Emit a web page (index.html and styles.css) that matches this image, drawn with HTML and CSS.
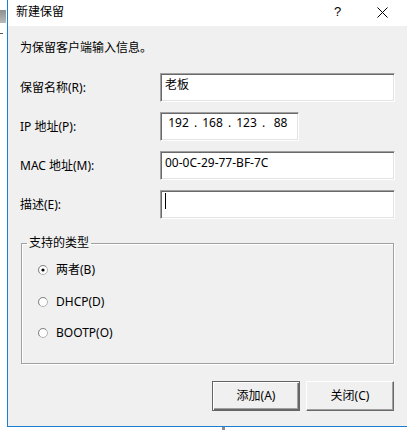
FILE: index.html
```html
<!DOCTYPE html>
<html lang="zh-CN">
<head>
<meta charset="utf-8">
<title>新建保留</title>
<link rel="stylesheet" href="styles.css">
</head>
<body>
<div class="screen">
  <div class="side">
    <span class="side-icon"></span>
    <span class="side-tick"></span>
  </div>
  <div class="main">
    <div class="dialog">
      <div class="titlebar">
        <span class="title">新建保留</span>
        <div class="tbtns">
          <span class="tbtn help">?</span>
          <span class="tbtn close">
            <svg width="11" height="11" viewBox="0 0 11 11"><path d="M0.5 0.5 L10.5 10.5 M10.5 0.5 L0.5 10.5" stroke="#000" stroke-width="1" fill="none"/></svg>
          </span>
        </div>
      </div>
      <div class="content">
        <p class="intro">为保留客户端输入信息。</p>
        <div class="form">
          <div class="row">
            <span class="label">保留名称(R):</span>
            <div class="field wide">老板</div>
          </div>
          <div class="row">
            <span class="label">IP 地址(P):</span>
            <div class="field ip">
              <span class="seg">192</span><span class="dot">.</span><span class="seg">168</span><span class="dot">.</span><span class="seg">123</span><span class="dot">.</span><span class="seg">88</span>
            </div>
          </div>
          <div class="row">
            <span class="label">MAC 地址(M):</span>
            <div class="field wide">00-0C-29-77-BF-7C</div>
          </div>
          <div class="row">
            <span class="label">描述(E):</span>
            <div class="field wide"><span class="caret"></span></div>
          </div>
        </div>
        <fieldset class="group">
          <legend class="legend">支持的类型</legend>
          <div class="radio">
            <svg class="rb" width="12" height="12" viewBox="0 0 12 12"><circle cx="6" cy="6" r="4.5" fill="#fff" stroke="#b4b4b4"/><path d="M2.8 9.2 A4.5 4.5 0 0 1 9.2 2.8" stroke="#8c8c8c" fill="none"/><circle cx="6" cy="6" r="1.6" fill="#000"/></svg>
            <span>两者(B)</span>
          </div>
          <div class="radio">
            <svg class="rb" width="12" height="12" viewBox="0 0 12 12"><circle cx="6" cy="6" r="4.5" fill="#fff" stroke="#b4b4b4"/><path d="M2.8 9.2 A4.5 4.5 0 0 1 9.2 2.8" stroke="#8c8c8c" fill="none"/></svg>
            <span>DHCP(D)</span>
          </div>
          <div class="radio">
            <svg class="rb" width="12" height="12" viewBox="0 0 12 12"><circle cx="6" cy="6" r="4.5" fill="#fff" stroke="#b4b4b4"/><path d="M2.8 9.2 A4.5 4.5 0 0 1 9.2 2.8" stroke="#8c8c8c" fill="none"/></svg>
            <span>BOOTP(O)</span>
          </div>
        </fieldset>
        <div class="buttons">
          <button class="btn default">添加(A)</button>
          <button class="btn">关闭(C)</button>
        </div>
      </div>
    </div>
    <div class="below"><span class="below-mark"></span></div>
  </div>
</div>
</body>
</html>
```
FILE: styles.css
```css
* { box-sizing: border-box; }
html, body {
  margin: 0;
  padding: 0;
  background: #fff;
}
body {
  font-family: "Noto Sans", "Noto Sans CJK SC", sans-serif;
  font-size: 12px;
  line-height: 16px;
  color: #000;
}
.screen {
  display: flex;
  width: 407px;
  height: 430px;
  overflow: hidden;
}
.side {
  width: 7px;
  flex: none;
  display: flex;
  flex-direction: column;
  padding-top: 10px;
  background: #fff;
}
.side-icon {
  display: block;
  width: 6px;
  height: 13px;
  background: linear-gradient(#8f8f8f, #b9b9b9);
}
.side-tick {
  display: block;
  width: 3px;
  height: 1px;
  margin-top: 10px;
  background: #555;
}
.main {
  flex: 1;
  display: flex;
  flex-direction: column;
}
.dialog {
  height: 427px;
  border-left: 1px solid #1a7fd4;
  border-bottom: 1px solid #1a7fd4;
  background: #f0f0f0;
  display: flex;
  flex-direction: column;
}
.titlebar {
  height: 26px;
  background: #fff;
  display: flex;
  align-items: center;
  justify-content: space-between;
  padding-left: 8px;
}
.title {
  line-height: 16px;
  margin-top: -2px;
}
.tbtns {
  display: flex;
  height: 26px;
}
.tbtn {
  width: 46px;
  display: flex;
  align-items: center;
  justify-content: center;
}
.help {
  font-family: "Liberation Sans", sans-serif;
  font-size: 13px;
  margin-top: -2px;
  padding-right: 1px;
}
.close svg { display: block; margin-top: -2px; margin-left: -3px; }
.content {
  flex: 1;
  padding: 14px 12px 0 12px;
  display: flex;
  flex-direction: column;
}
.intro {
  margin: 0;
  line-height: 16px;
}
.form {
  margin-top: 17px;
  display: flex;
  flex-direction: column;
  gap: 10px;
}
.row {
  display: flex;
  align-items: center;
  height: 29px;
}
.label {
  width: 140px;
  flex: none;
}
.field {
  height: 29px;
  background: #fff;
  border-top: 1px solid #a0a0a0;
  border-left: 1px solid #a0a0a0;
  border-right: 1px solid #fff;
  border-bottom: 1px solid #fff;
  box-shadow: inset 1px 1px 0 #696969, inset -1px -1px 0 #e3e3e3;
  padding: 3px 4px 0 4px;
  line-height: 16px;
}
.wide { width: 235px; }
.ip {
  width: 139px;
  display: flex;
  padding-left: 5.5px;
  padding-top: 2px;
}
.seg {
  width: 24px;
  text-align: center;
}
.dot {
  width: 10px;
  text-align: center;
}
.caret {
  display: block;
  width: 1px;
  height: 16px;
  background: #000;
  margin-top: -1px;
}
.group {
  margin: 16px 1px 0 1px;
  padding: 11px 15px 22px 15px;
  border: 1px solid #a0a0a0;
  box-shadow: inset 1px 1px 0 #fff, 1px 1px 0 #fff;
  display: flex;
  flex-direction: column;
  gap: 15.5px;
  min-width: 0;
}
.legend {
  margin-left: -10px;
  padding: 0 2px;
  line-height: 16px;
}
.radio {
  display: flex;
  align-items: center;
  gap: 7px;
  height: 16px;
}
.rb { display: block; flex: none; }
.buttons {
  margin: 17px 1px 0 0;
  display: flex;
  justify-content: flex-end;
  gap: 6px;
}
.btn {
  font: inherit;
  color: #000;
  width: 88px;
  height: 30px;
  padding: 0;
  background: #f0f0f0;
  border-top: 1px solid #fff;
  border-left: 1px solid #fff;
  border-right: 1px solid #696969;
  border-bottom: 1px solid #696969;
  box-shadow: inset -1px -1px 0 #a0a0a0;
}
.btn.default {
  border: 1px solid #646464;
  box-shadow: inset 1px 1px 0 #fff, inset -1px -1px 0 #696969, inset -2px -2px 0 #a0a0a0;
}
.below {
  flex: 1;
  background: #fff;
  position: relative;
}
.below-mark {
  display: block;
  width: 3px;
  height: 3px;
  margin-left: 215px;
  background: #8a8a8a;
}
```
